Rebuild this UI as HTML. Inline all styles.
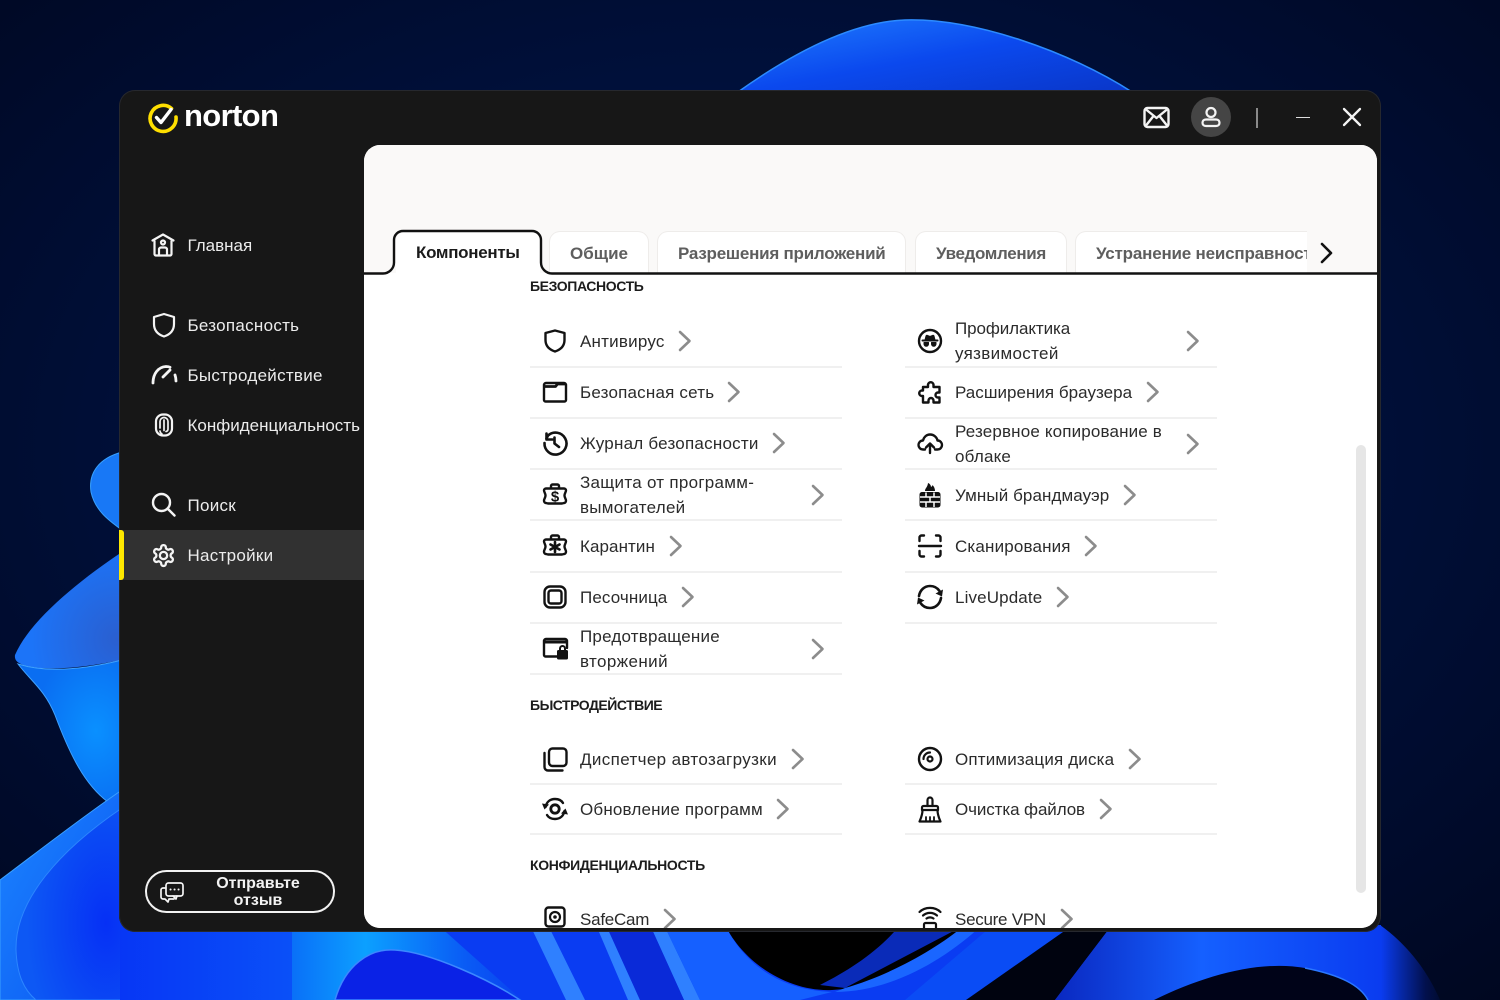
<!DOCTYPE html>
<html lang="ru"><head><meta charset="utf-8"><title>Norton</title>
<style>
html,body{margin:0;padding:0}
body{width:1500px;height:1000px;position:relative;overflow:hidden;background:#000d2c;font-family:"Liberation Sans",sans-serif}
svg{position:absolute;overflow:visible}
#win{position:absolute;left:119px;top:90px;width:1262px;height:842px;background:#171717;border-radius:16px;box-shadow:inset 0 0 0 1px #26282e}
#panel{position:absolute;left:364px;top:145px;width:1013px;height:783px;background:#fff;border-radius:16px;overflow:hidden}
#panel .in{position:absolute;left:-364px;top:-145px;width:1500px;height:1000px}
.s{position:absolute;left:187.500px;font-size:17px;line-height:24px;color:#ececec;white-space:nowrap;letter-spacing:.28px}
.t{position:absolute;font-size:17px;line-height:25px;color:#2b2b2b;white-space:nowrap;letter-spacing:.2px}
.h{position:absolute;left:530px;font-size:14px;line-height:18px;font-weight:bold;color:#1c1c1c;white-space:nowrap;letter-spacing:-.4px}
.tab{position:absolute;top:231px;height:42px;box-sizing:border-box;background:#fff;border:1px solid #eeecea;border-bottom:0;border-radius:11px 11px 0 0;color:#5e5e5e;font-weight:bold;font-size:17px;line-height:43px;padding-left:20px;white-space:nowrap;overflow:hidden}
.l{position:absolute;height:2px;background:#f0f0f0;width:312px}
.i{fill:none;stroke:#121212;stroke-width:2.400;stroke-linecap:round;stroke-linejoin:round}
.w{fill:none;stroke:#f4f4f4;stroke-width:2.200;stroke-linecap:round;stroke-linejoin:round}
.c{fill:none;stroke:#8c8c8c;stroke-width:2.600;stroke-linecap:round;stroke-linejoin:round}
</style></head><body>

<!-- wallpaper -->
<svg style="left:0;top:0" width="1500" height="1000" viewBox="0 0 1500 1000">
<defs>
<radialGradient id="bg" cx="50%" cy="45%" r="75%"><stop offset="0" stop-color="#021b50"/><stop offset=".55" stop-color="#000f38"/><stop offset="1" stop-color="#000720"/></radialGradient>
<linearGradient id="top" x1="0" y1="0" x2="1" y2="1"><stop offset="0" stop-color="#1f7dff"/><stop offset=".5" stop-color="#0b49ee"/><stop offset="1" stop-color="#0a36c8"/></linearGradient>
<radialGradient id="bowl" cx="75%" cy="50%" r="60%"><stop offset="0" stop-color="#0a90ff"/><stop offset="1" stop-color="#0a6ef2"/></radialGradient>
<radialGradient id="lobe" cx="95%" cy="75%" r="80%"><stop offset="0" stop-color="#2a5fd0"/><stop offset="1" stop-color="#1c74f8"/></radialGradient>
<linearGradient id="low" x1="0" y1="0" x2="1" y2="1"><stop offset="0" stop-color="#1c86ff"/><stop offset="1" stop-color="#0a54f2"/></linearGradient>
<radialGradient id="deep" cx="85%" cy="60%" r="75%"><stop offset="0" stop-color="#0630f5"/><stop offset="1" stop-color="#0d58f4"/></radialGradient>
<linearGradient id="bs" gradientUnits="userSpaceOnUse" x1="118" y1="0" x2="292" y2="0"><stop offset="0" stop-color="#0736f5"/><stop offset="1" stop-color="#0a50f8"/></linearGradient>
<linearGradient id="b1" x1="0" y1="0" x2="1" y2="0"><stop offset="0" stop-color="#0a70f8"/><stop offset=".32" stop-color="#0ca0ff"/><stop offset=".75" stop-color="#0a5cf5"/><stop offset="1" stop-color="#0a42f0"/></linearGradient>
<linearGradient id="b3" gradientUnits="userSpaceOnUse" x1="1055" y1="0" x2="1381" y2="0"><stop offset="0" stop-color="#0a28c0"/><stop offset=".45" stop-color="#1560ff"/><stop offset="1" stop-color="#0a3cf0"/></linearGradient>
<linearGradient id="b4" gradientUnits="userSpaceOnUse" x1="1381" y1="0" x2="1445" y2="0"><stop offset="0" stop-color="#0a3cf0"/><stop offset=".7" stop-color="#02104c"/><stop offset="1" stop-color="#000a28"/></linearGradient>
</defs>
<rect width="1500" height="1000" fill="url(#bg)"/>
<path d="M738 92C790 55 850 22 905 20C975 18 1070 52 1132 92Z" fill="url(#top)" stroke="#2c8bff" stroke-width="1.500"/>
<path d="M122 452C100 458 88 472 91 492C95 510 108 520 122 530Z" fill="#1878f6" stroke="#38a0ff" stroke-width="1"/>
<path d="M122 552C80 580 30 620 15 655C14 662 20 666 40 668C70 670 100 664 122 660Z" fill="url(#lobe)"/>
<path d="M18 664C30 680 45 690 55 715C70 755 85 785 108 802L122 800V660C90 668 50 674 18 664Z" fill="url(#bowl)" stroke="#3fa2ff" stroke-width="1"/>
<path d="M0 880C40 850 85 815 122 790V1000H0Z" fill="url(#low)" stroke="#3aa0ff" stroke-width="1"/>
<path d="M122 808C60 850 15 900 16 950C17 975 24 990 36 1000H122Z" fill="url(#deep)" stroke="#2c86ff" stroke-width="1"/>
<!-- bottom strip -->
<rect x="120" y="925" width="175" height="75" fill="url(#bs)"/>
<rect x="292" y="925" width="816" height="75" fill="#0a3cf2"/>
<path d="M292 925H438L522 1000H292Z" fill="url(#b1)"/>
<path d="M335 1000C345 965 370 948 395 950C430 952 490 980 520 1000Z" fill="#0a22e6" stroke="#3c88ff" stroke-width="1.500"/>
<path d="M530 925H548L585 1000H566ZM596 925H606L640 1000H628ZM650 925H664L700 1000H684Z" fill="#2f80ff"/>
<path d="M606 925H650L684 1000H640Z" fill="#0a2ad8"/>
<path d="M664 925H725C745 965 780 990 832 992L800 1000H700Z" fill="#1560ff"/>
<path d="M725 925C745 965 790 992 832 990C880 988 940 960 980 925Z" fill="#000"/>
<path d="M900 925H965L845 988L820 985C850 970 880 950 900 925Z" fill="#0a2bb8"/>
<path d="M965 925H982C945 960 890 992 835 992L845 988C890 975 935 950 965 925Z" fill="#1a66ff"/>
<path d="M993 925H1073L966 1000H905Z" fill="#0a4cf5"/>
<path d="M1073 925H1112L1055 1000H966Z" fill="#00030f"/>
<path d="M1112 925H1381V1000H1055Z" fill="url(#b3)"/>
<path d="M1380 925C1408 945 1428 972 1440 1000H1380Z" fill="url(#b4)"/>
<path d="M1154 1000C1205 975 1260 960 1305 968C1340 975 1360 985 1368 1000Z" fill="#000318"/>
<path d="M1305 968C1340 975 1360 985 1368 1000" fill="none" stroke="#2b78ff" stroke-width="1.500"/>
</svg>

<div id="win"></div>

<!-- logo -->
<svg style="left:147px;top:101px" width="32" height="32" viewBox="0 0 32 32"><path d="M24.500 7.500A13 13 0 1 0 29 16" fill="none" stroke="#ffdf00" stroke-width="3.600" stroke-linecap="round"/><path d="M9.500 16.500l4.500 5L24 8.500" fill="none" stroke="#fff" stroke-width="3.400" stroke-linecap="round" stroke-linejoin="round"/></svg>
<div style="position:absolute;left:184px;top:98px;font-size:31px;line-height:36px;font-weight:bold;color:#fff;letter-spacing:-.65px">norton</div>

<!-- sidebar -->
<div style="position:absolute;left:119px;top:530px;width:245px;height:50px;background:#313131"></div>
<div style="position:absolute;left:119px;top:530px;width:5px;height:50px;background:#ffe800;border-radius:0 3px 3px 0"></div>

<svg class="w" style="left:151px;top:233px" width="24" height="24" viewBox="0 0 24 24"><path d="M1.500 7.500L12 1.500l10.500 6"/><path d="M3.500 8v13a1.500 1.500 0 0 0 1.500 1.500h14a1.500 1.500 0 0 0 1.500-1.500V8"/><circle cx="12" cy="9.500" r="2"/><path d="M8 22.500v-6a2 2 0 0 1 2-2h4a2 2 0 0 1 2 2v6"/></svg>
<div class="s" style="top:234px;letter-spacing:0">Главная</div>
<svg class="w" style="left:152px;top:313px" width="24" height="24" viewBox="0 0 24 24"><path d="M12 1L22 4v7c0 6.500-4 10.500-10 12.500C6 21.500 2 17.500 2 11V4z"/></svg>
<div class="s" style="top:314px">Безопасность</div>
<svg class="w" style="left:150px;top:363px" width="28" height="24" viewBox="0 0 28 24"><path d="M3 20C3 11 8 4 16 3.500c2 0 3 .3 4 .8" stroke-width="2.800"/><path d="M26 18c0-2-.3-4-1-6" stroke-width="2.800"/><path d="M13 14l7-7" stroke-width="2.800"/></svg>
<div class="s" style="top:364px">Быстродействие</div>
<svg class="w" style="left:152px;top:412px" width="24" height="26" viewBox="0 0 24 26"><rect x="4" y="2.500" width="16" height="21" rx="7"/><path d="M8 16V9.500a4 4 0 0 1 8 0V17a2.500 2.500 0 0 1-2 2.500M12 8v10.500M10 22c-1-.5-2-2-2-3" stroke-width="1.700"/></svg>
<div class="s" style="top:414px;letter-spacing:0">Конфиденциальность</div>
<svg class="w" style="left:151px;top:492px" width="25" height="25" viewBox="0 0 25 25"><circle cx="10.500" cy="10.500" r="8.500" stroke-width="2.400"/><path d="M17 17l6.500 6.500" stroke-width="2.400"/></svg>
<div class="s" style="top:494px">Поиск</div>
<svg class="w" style="left:151px;top:543px" width="25" height="25" viewBox="0 0 24 24"><path d="M12.220 2h-.44a2 2 0 0 0-2 2v.18a2 2 0 0 1-1 1.730l-.43.25a2 2 0 0 1-2 0l-.15-.08a2 2 0 0 0-2.730.73l-.22.38a2 2 0 0 0 .73 2.730l.15.1a2 2 0 0 1 1 1.720v.51a2 2 0 0 1-1 1.740l-.15.09a2 2 0 0 0-.73 2.730l.22.38a2 2 0 0 0 2.730.73l.15-.08a2 2 0 0 1 2 0l.43.25a2 2 0 0 1 1 1.730V20a2 2 0 0 0 2 2h.44a2 2 0 0 0 2-2v-.18a2 2 0 0 1 1-1.730l.43-.25a2 2 0 0 1 2 0l.15.08a2 2 0 0 0 2.730-.73l.22-.39a2 2 0 0 0-.73-2.730l-.15-.08a2 2 0 0 1-1-1.740v-.5a2 2 0 0 1 1-1.740l.15-.09a2 2 0 0 0 .73-2.730l-.22-.38a2 2 0 0 0-2.730-.73l-.15.08a2 2 0 0 1-2 0l-.43-.25a2 2 0 0 1-1-1.730V4a2 2 0 0 0-2-2z"/><circle cx="12" cy="12" r="3.500"/></svg>
<div class="s" style="top:544px">Настройки</div>

<!-- feedback -->
<div style="position:absolute;left:145px;top:870px;width:190px;height:43px;box-sizing:border-box;border:2.500px solid #f2f2f2;border-radius:22px"></div>
<svg class="w" style="left:160px;top:881px;stroke-width:1.700" width="24" height="22" viewBox="0 0 24 22"><rect x="6" y="2" width="17" height="13" rx="2.500"/><path d="M13 15l3 3 1-3"/><path d="M6 7H3a2 2 0 0 0-2 2v7a2 2 0 0 0 2 2h2l3 3 1-3h5"/><path d="M10.500 8.500h.1M14.500 8.500h.1M18.500 8.500h.1" stroke-width="2"/></svg>
<div style="position:absolute;left:188px;top:875px;width:140px;text-align:center;font-size:16px;line-height:17px;font-weight:bold;color:#f2f2f2">Отправьте<br>отзыв</div>

<!-- header controls -->
<svg class="w" style="left:1143px;top:106px;stroke-width:2.400" width="27" height="23" viewBox="0 0 27 23"><rect x="1.500" y="2" width="24" height="19" rx="3"/><path d="M3 3.500L13.500 12 24 3.500M3 19.500L10.500 10M24 19.500L16.500 10"/></svg>
<div style="position:absolute;left:1191px;top:97px;width:40px;height:40px;border-radius:50%;background:#454545"></div>
<svg class="w" style="left:1200px;top:106px" width="22" height="22" viewBox="0 0 22 22"><circle cx="11" cy="6.500" r="4.500"/><path d="M6 13.500h10c2.500 0 3.500 1.500 3.500 3.300 0 1.700-1 3.200-3.500 3.200H6c-2.500 0-3.500-1.500-3.500-3.200 0-1.800 1-3.300 3.500-3.300z"/></svg>
<div style="position:absolute;left:1256px;top:108px;width:2px;height:20px;background:#8a8a8a"></div>
<div style="position:absolute;left:1296px;top:116.500px;width:14px;height:1.500px;background:#ddd"></div>
<svg class="w" style="left:1342px;top:107px;stroke-width:2.300" width="20" height="20" viewBox="0 0 20 20"><path d="M2 2l16 16M18 2L2 18"/></svg>

<!-- content -->
<div id="panel"><div class="in">
<div style="position:absolute;left:364px;top:145px;width:1013px;height:128px;background:#faf9f8"></div>

<div class="tab" style="left:549px;width:100px">Общие</div>
<div class="tab" style="left:657px;width:249px;letter-spacing:-.23px">Разрешения приложений</div>
<div class="tab" style="left:915px;width:152px;letter-spacing:-.35px">Уведомления</div>
<div class="tab" style="left:1075px;width:232px;border-right:0;border-radius:11px 0 0 0;letter-spacing:-.2px">Устранение неисправностей</div>

<div style="position:absolute;left:396px;top:232px;width:144px;height:43px;background:#fff;border-radius:9px 9px 0 0"></div>
<div style="position:absolute;left:364px;top:275px;width:1013px;height:660px;background:#fff"></div>
<svg style="left:364px;top:225px" width="1013" height="52" viewBox="364 225 1013 52"><path d="M364 273.500h19a11 11 0 0 0 11-11V240a9 9 0 0 1 9-9h129a9 9 0 0 1 9 9v22.500a11 11 0 0 0 11 11h825" fill="none" stroke="#111" stroke-width="2.400"/></svg>
<div style="position:absolute;left:416px;top:241px;font-size:17px;line-height:24px;font-weight:bold;color:#1a1a1a;white-space:nowrap;letter-spacing:-.3px">Компоненты</div>
<svg style="left:1317px;top:240px;fill:none;stroke:#111;stroke-width:2.600;stroke-linecap:round;stroke-linejoin:round" width="18" height="26" viewBox="0 0 18 26"><path d="M5 4l9 9-9 9"/></svg>

<div style="position:absolute;left:1356px;top:445px;width:10px;height:448px;background:#e6e6e6;border-radius:5px"></div>

<div class="h" style="top:277px">БЕЗОПАСНОСТЬ</div>
<div class="h" style="top:696px;letter-spacing:-.5px">БЫСТРОДЕЙСТВИЕ</div>
<div class="h" style="top:856px;letter-spacing:-.33px">КОНФИДЕНЦИАЛЬНОСТЬ</div>

<div class="l" style="left:530px;top:366px"></div><div class="l" style="left:530px;top:417px"></div><div class="l" style="left:530px;top:468px"></div><div class="l" style="left:530px;top:519px"></div><div class="l" style="left:530px;top:571px"></div><div class="l" style="left:530px;top:622px"></div><div class="l" style="left:530px;top:673px"></div>
<div class="l" style="left:905px;top:366px"></div><div class="l" style="left:905px;top:417px"></div><div class="l" style="left:905px;top:468px"></div><div class="l" style="left:905px;top:519px"></div><div class="l" style="left:905px;top:571px"></div><div class="l" style="left:905px;top:622px"></div>
<div class="l" style="left:530px;top:783px"></div><div class="l" style="left:530px;top:833px"></div><div class="l" style="left:905px;top:783px"></div><div class="l" style="left:905px;top:833px"></div>

<!-- left column -->
<svg class="i" style="left:543px;top:329px" width="24" height="24" viewBox="0 0 24 24"><path d="M12 1.500L21.500 4v7c0 5.500-3.500 9.500-9.500 11.500C6 20.500 2.500 16.500 2.500 11V4z"/></svg>
<div class="t" style="left:580px;top:329px;letter-spacing:.22px">Антивирус</div>
<svg class="c" style="left:678px;top:330px" width="14" height="22" viewBox="0 0 14 22"><path d="M2 2l9.500 9L2 20"/></svg>

<svg class="i" style="left:543px;top:380px" width="24" height="24" viewBox="0 0 24 24"><path d="M3 3h18a2 2 0 0 1 2 2v15a1.500 1.500 0 0 1-1.500 1.500h-19A1.500 1.500 0 0 1 1 20V5a2 2 0 0 1 2-2z"/><path d="M1.500 6.500h11l2-2.500h7.500" stroke-width="2.800"/></svg>
<div class="t" style="left:580px;top:380px">Безопасная сеть</div>
<svg class="c" style="left:727px;top:381px" width="14" height="22" viewBox="0 0 14 22"><path d="M2 2l9.500 9L2 20"/></svg>

<svg class="i" style="left:543px;top:431px" width="24" height="24" viewBox="0 0 24 24"><path d="M3.500 2.500v6h6" stroke-width="2.600"/><path d="M1.500 12A11 11 0 1 0 5 4.500L3.500 7.500" stroke-width="2.600" fill="none"/><path d="M11.500 6.500v6l4.500 3.500" stroke-width="2.600"/></svg>
<div class="t" style="left:580px;top:431px;letter-spacing:.23px">Журнал безопасности</div>
<svg class="c" style="left:772px;top:432px" width="14" height="22" viewBox="0 0 14 22"><path d="M2 2l9.500 9L2 20"/></svg>

<svg class="i" style="left:543px;top:483px" width="24" height="24" viewBox="0 0 24 24"><path d="M8 5V3a1.500 1.500 0 0 1 1.500-1.500h5A1.500 1.500 0 0 1 16 3v2"/><path d="M3 5.500h18c1 0 2 .8 2 1.800 0 2-1.500 3-1.500 5.200s1.500 3.200 1.500 5.200c0 1.200-1 2.300-2 2.300l-2 .5H5l-2-.5c-1 0-2-1.100-2-2.300 0-2 1.500-3 1.500-5.200S1 9.300 1 7.300C1 6.300 2 5.500 3 5.500z"/><text x="12" y="18.500" text-anchor="middle" font-family="Liberation Sans" font-weight="bold" font-size="15" fill="#121212" stroke="none">$</text></svg>
<div class="t" style="left:580px;top:470px;letter-spacing:.28px">Защита от программ-</div>
<div class="t" style="left:580px;top:495px;letter-spacing:.25px">вымогателей</div>
<svg class="c" style="left:811px;top:484px" width="14" height="22" viewBox="0 0 14 22"><path d="M2 2l9.500 9L2 20"/></svg>

<svg class="i" style="left:543px;top:534px" width="24" height="24" viewBox="0 0 24 24"><path d="M8 5V3a1.500 1.500 0 0 1 1.500-1.500h5A1.500 1.500 0 0 1 16 3v2"/><path d="M3 5.500h18c1 0 2 .8 2 1.800 0 2-1.500 3-1.500 5.200s1.500 3.200 1.500 5.200c0 1.200-1 2.300-2 2.300l-2 .5H5l-2-.5c-1 0-2-1.100-2-2.300 0-2 1.500-3 1.500-5.200S1 9.300 1 7.300C1 6.300 2 5.500 3 5.500z"/><path d="M12 8v10M7.500 10.500l9 5M16.500 10.500l-9 5" stroke-width="2.600"/></svg>
<div class="t" style="left:580px;top:534px;letter-spacing:.08px">Карантин</div>
<svg class="c" style="left:669px;top:535px" width="14" height="22" viewBox="0 0 14 22"><path d="M2 2l9.500 9L2 20"/></svg>

<svg class="i" style="left:543px;top:585px" width="24" height="24" viewBox="0 0 24 24"><rect x="1.500" y="1.500" width="21" height="21" rx="5.500"/><rect x="5.500" y="5.500" width="13" height="13" rx="2.500"/></svg>
<div class="t" style="left:580px;top:585px;letter-spacing:.11px">Песочница</div>
<svg class="c" style="left:681px;top:586px" width="14" height="22" viewBox="0 0 14 22"><path d="M2 2l9.500 9L2 20"/></svg>

<svg class="i" style="left:543px;top:637px" width="26" height="24" viewBox="0 0 26 24"><path d="M14 19.500H2.500A1.500 1.500 0 0 1 1 18V4a2 2 0 0 1 2-2h19a2 2 0 0 1 2 2v7"/><path d="M1.500 5h22" stroke-width="3"/><rect x="14" y="13" width="11" height="9.500" rx="1.500" fill="#121212" stroke="none"/><path d="M17 13.500v-2a2.500 2.500 0 0 1 5 0v2" stroke-width="2"/></svg>
<div class="t" style="left:580px;top:624px">Предотвращение</div>
<div class="t" style="left:580px;top:649px;letter-spacing:.4px">вторжений</div>
<svg class="c" style="left:811px;top:638px" width="14" height="22" viewBox="0 0 14 22"><path d="M2 2l9.500 9L2 20"/></svg>

<!-- right column -->
<svg class="i" style="left:918px;top:329px" width="24" height="24" viewBox="0 0 24 24"><circle cx="12" cy="12" r="11"/><path d="M4.500 11.500h15" stroke-width="2"/><path d="M7 11l1-4a1 1 0 0 1 1.500-.6L12 7.500l2.500-1.100A1 1 0 0 1 16 7l1 4z" fill="#121212" stroke-width="1"/><path d="M6 13.500h4.500v1.500a2 2 0 0 1-4.500 0zM13.500 13.500H18v1.500a2 2 0 0 1-4.500 0z" fill="#121212" stroke-width="1"/></svg>
<div class="t" style="left:955px;top:316px;letter-spacing:-.09px">Профилактика</div>
<div class="t" style="left:955px;top:341px;letter-spacing:.33px">уязвимостей</div>
<svg class="c" style="left:1186px;top:330px" width="14" height="22" viewBox="0 0 14 22"><path d="M2 2l9.500 9L2 20"/></svg>

<svg class="i" style="left:918px;top:380px" width="24" height="24" viewBox="0 0 24 24"><path d="M10 4.500a2.800 2.800 0 0 1 5.500 0V7h6v5.500h-1.500a2.500 2.500 0 0 0 0 5h1.500V22.500h-6v-2a2.500 2.500 0 0 0-5 0v2H5v-6.500H3.500a2.800 2.800 0 0 1 0-5.500H5V7h5z"/></svg>
<div class="t" style="left:955px;top:380px;letter-spacing:.03px">Расширения браузера</div>
<svg class="c" style="left:1146px;top:381px" width="14" height="22" viewBox="0 0 14 22"><path d="M2 2l9.500 9L2 20"/></svg>

<svg class="i" style="left:917px;top:431px" width="26" height="24" viewBox="0 0 26 24"><path d="M8 18.500H6C3 18.500 1.500 16 1.500 14S3 9.500 6 9.500C7 5.500 10 3.500 13 3.500c4 0 7 3 7.500 6 3 0 4.500 2.500 4.500 4.500s-1.500 4.500-4.500 4.500H18"/><path d="M13 22v-9M9 16.500l4-4 4 4"/></svg>
<div class="t" style="left:955px;top:419px;letter-spacing:.16px">Резервное копирование в</div>
<div class="t" style="left:955px;top:444px">облаке</div>
<svg class="c" style="left:1186px;top:433px" width="14" height="22" viewBox="0 0 14 22"><path d="M2 2l9.500 9L2 20"/></svg>

<svg style="left:919px;top:482px" width="22" height="26" viewBox="0 0 22 26"><path d="M3 10h16a2.500 2.500 0 0 1 2.500 2.500V23a2.500 2.500 0 0 1-2.500 2.500H3A2.500 2.500 0 0 1 .5 23V12.500A2.500 2.500 0 0 1 3 10z" fill="#121212"/><path d="M6 9c0-3 2.500-3.500 3-8 2.500 1 3 3 3 4 1-.5 1.500-1.500 1.500-2 1.500 1.500 2.500 3.500 2.500 6z" fill="#121212"/><path d="M1 15h20M1 20h20M7 10.500v4.500M15 10.500v4.500M11 15v5M7 20v5M15 20v5" stroke="#fff" stroke-width="1.500" fill="none"/></svg>
<div class="t" style="left:955px;top:483px;letter-spacing:.09px">Умный брандмауэр</div>
<svg class="c" style="left:1123px;top:484px" width="14" height="22" viewBox="0 0 14 22"><path d="M2 2l9.500 9L2 20"/></svg>

<svg class="i" style="left:918px;top:534px" width="24" height="24" viewBox="0 0 24 24"><path d="M1.500 7V3.500a2 2 0 0 1 2-2H6M18 1.500h2.500a2 2 0 0 1 2 2V7M1.500 17v3.500a2 2 0 0 0 2 2H6M18 22.500h2.500a2 2 0 0 0 2-2V17M1 12h22"/></svg>
<div class="t" style="left:955px;top:534px;letter-spacing:.16px">Сканирования</div>
<svg class="c" style="left:1084px;top:535px" width="14" height="22" viewBox="0 0 14 22"><path d="M2 2l9.500 9L2 20"/></svg>

<svg class="i" style="left:916px;top:584px" width="28" height="26" viewBox="0 0 28 26"><path d="M3 12C4 6 8.500 2 14 2c4 0 7.500 2 9.500 5" stroke-width="2.600"/><path d="M25 14c-1 6-5.500 10-11 10-4 0-7.500-2-9.500-5" stroke-width="2.600"/><path d="M27 5.500l-1 7-6.500-3zM1 20.500l1-7 6.500 3z" fill="#121212" stroke="none"/></svg>
<div class="t" style="left:955px;top:585px;letter-spacing:.13px">LiveUpdate</div>
<svg class="c" style="left:1056px;top:586px" width="14" height="22" viewBox="0 0 14 22"><path d="M2 2l9.500 9L2 20"/></svg>

<!-- performance -->
<svg class="i" style="left:543px;top:747px" width="25" height="25" viewBox="0 0 25 25"><rect x="6" y="1.500" width="17.500" height="17.500" rx="3.500"/><path d="M1.500 6v14a3.500 3.500 0 0 0 3.500 3.500h14.500"/></svg>
<div class="t" style="left:580px;top:747px;letter-spacing:.37px">Диспетчер автозагрузки</div>
<svg class="c" style="left:791px;top:748px" width="14" height="22" viewBox="0 0 14 22"><path d="M2 2l9.500 9L2 20"/></svg>

<svg class="i" style="left:541px;top:796px" width="28" height="26" viewBox="0 0 28 26"><circle cx="14" cy="13" r="4.200" stroke-width="2.800"/><path d="M4.500 11C5.500 6 9 3 14 3c3.500 0 6.500 1.500 8 4"/><path d="M23.500 15c-1 5-4.500 8-9.500 8-3.500 0-6.500-1.500-8-4"/><path d="M1 7.500l7 1-4.500 5zM27 18.500l-7-1 4.500-5z" fill="#121212" stroke="none"/></svg>
<div class="t" style="left:580px;top:797px;letter-spacing:.18px">Обновление программ</div>
<svg class="c" style="left:776px;top:798px" width="14" height="22" viewBox="0 0 14 22"><path d="M2 2l9.500 9L2 20"/></svg>

<svg class="i" style="left:918px;top:747px" width="24" height="24" viewBox="0 0 24 24"><circle cx="12" cy="12" r="11"/><circle cx="12" cy="12" r="2.500" stroke-width="2.200"/><path d="M5.500 12A6.500 6.500 0 0 1 12 5.500" stroke-width="2.200"/></svg>
<div class="t" style="left:955px;top:747px;letter-spacing:.16px">Оптимизация диска</div>
<svg class="c" style="left:1128px;top:748px" width="14" height="22" viewBox="0 0 14 22"><path d="M2 2l9.500 9L2 20"/></svg>

<svg class="i" style="left:918px;top:797px;stroke-width:2.200" width="24" height="26" viewBox="0 0 24 26"><path d="M9.500 9V3a2.500 2.500 0 0 1 5 0v6"/><path d="M4 13V10.500a1.500 1.500 0 0 1 1.500-1.500h13a1.500 1.500 0 0 1 1.500 1.500V13z"/><path d="M4.500 13c0 5-1.500 8-3 11.500h21c-1.500-3.500-3-6.500-3-11.500"/><path d="M8 24v-4M12 24v-4M16 24v-4" stroke-width="1.800"/></svg>
<div class="t" style="left:955px;top:797px;letter-spacing:-.1px">Очистка файлов</div>
<svg class="c" style="left:1099px;top:798px" width="14" height="22" viewBox="0 0 14 22"><path d="M2 2l9.500 9L2 20"/></svg>

<!-- privacy -->
<svg class="i" style="left:544px;top:906px" width="22" height="26" viewBox="0 0 22 26"><rect x="1.500" y="1.500" width="19" height="19" rx="3"/><circle cx="11" cy="11" r="5" stroke-width="2.200"/><circle cx="11" cy="11" r="1.800" fill="#121212" stroke="none"/></svg>
<div class="t" style="left:580px;top:907px;letter-spacing:-.24px">SafeCam</div>
<svg class="c" style="left:663px;top:908px" width="14" height="22" viewBox="0 0 14 22"><path d="M2 2l9.500 9L2 20"/></svg>

<svg class="i" style="left:918px;top:905px;stroke-width:2.200" width="24" height="26" viewBox="0 0 24 26"><path d="M1.500 7C7 1.500 17 1.500 22.500 7M5 10.500c4-3.500 10-3.500 14 0M8.500 13.500c2-1.500 5-1.500 7 0"/><rect x="6" y="18" width="12" height="9" rx="1.500"/></svg>
<div class="t" style="left:955px;top:907px;letter-spacing:-.27px">Secure VPN</div>
<svg class="c" style="left:1060px;top:908px" width="14" height="22" viewBox="0 0 14 22"><path d="M2 2l9.500 9L2 20"/></svg>
</div></div>
</body></html>
